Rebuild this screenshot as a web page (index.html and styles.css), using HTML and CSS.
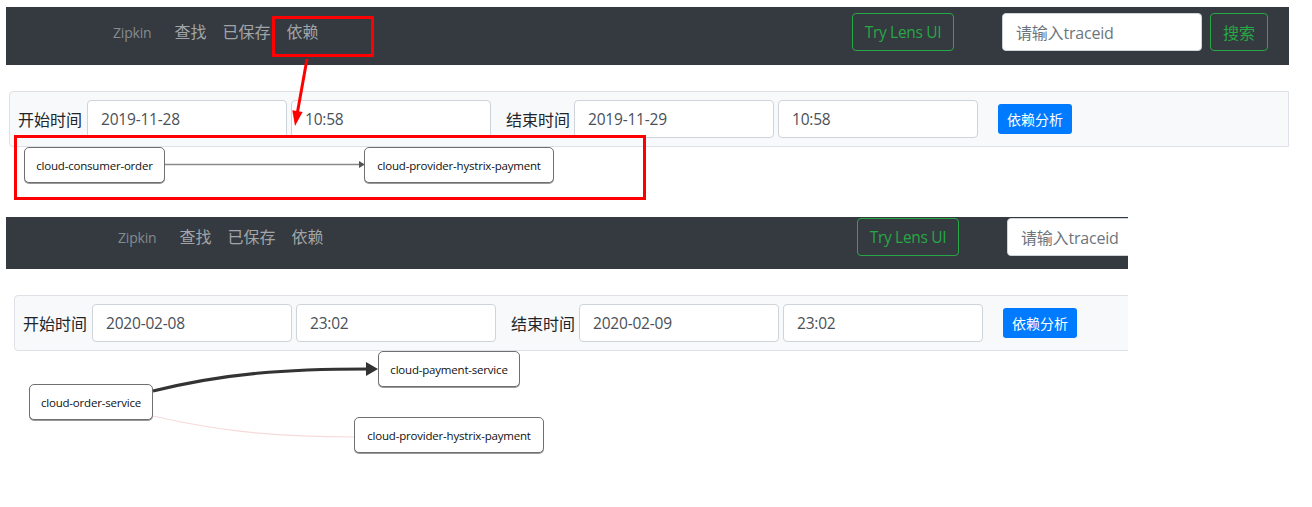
FILE: index.html
```html
<!DOCTYPE html>
<html lang="zh-CN">
<head>
<meta charset="utf-8">
<title>Zipkin 依赖</title>
<link rel="stylesheet" href="styles.css">
</head>
<body>
<div class="page">
  <section class="shot shot-a">
    <nav class="navbar">
      <span class="brand">Zipkin</span>
      <ul class="nav-links">
        <li>查找</li>
        <li>已保存</li>
        <li>依赖</li>
      </ul>
      <div class="nav-right">
        <span class="btn-outline lens">Try Lens UI</span>
        <span class="trace-input">请输入traceid</span>
        <span class="btn-outline search">搜索</span>
      </div>
    </nav>
    <div class="panel">
      <span class="label">开始时间</span>
      <span class="field">2019-11-28</span>
      <span class="field">10:58</span>
      <span class="label label-end">结束时间</span>
      <span class="field">2019-11-29</span>
      <span class="field">10:58</span>
      <span class="btn-primary">依赖分析</span>
    </div>
    <div class="graph graph-a">
      <svg class="edges" width="600" height="70" viewBox="0 0 600 70">
        <line x1="159" y1="17.5" x2="354" y2="17.5" stroke="#8a8a8a" stroke-width="1.5"/>
        <polygon points="353,14 359,17.5 353,21" fill="#555"/>
      </svg>
      <div class="node n-consumer">cloud-consumer-order</div>
      <div class="node n-hystrix-a">cloud-provider-hystrix-payment</div>
    </div>
  </section>

  <section class="shot shot-b">
    <nav class="navbar">
      <span class="brand">Zipkin</span>
      <ul class="nav-links">
        <li>查找</li>
        <li>已保存</li>
        <li>依赖</li>
      </ul>
      <div class="nav-right">
        <span class="btn-outline lens">Try Lens UI</span>
        <span class="trace-input">请输入traceid</span>
      </div>
    </nav>
    <div class="panel">
      <span class="label">开始时间</span>
      <span class="field">2020-02-08</span>
      <span class="field">23:02</span>
      <span class="label label-end">结束时间</span>
      <span class="field">2020-02-09</span>
      <span class="field">23:02</span>
      <span class="btn-primary">依赖分析</span>
    </div>
    <div class="graph graph-b">
      <svg class="edges" width="600" height="156" viewBox="0 0 600 156">
        <path d="M147,65 C220,82 280,86 348,86" fill="none" stroke="#f7dada" stroke-width="1.2"/>
        <path d="M147,40 C220,22 280,18 362,18" fill="none" stroke="#333" stroke-width="3.2"/>
        <polygon points="360,11 372,18 360,25" fill="#333"/>
      </svg>
      <div class="node n-payment">cloud-payment-service</div>
      <div class="node n-order">cloud-order-service</div>
      <div class="node n-hystrix-b">cloud-provider-hystrix-payment</div>
    </div>
  </section>

  <div class="annot annot-nav"></div>
  <div class="annot annot-graph"></div>
  <svg class="annot-arrow" width="40" height="80" viewBox="280 55 40 80">
    <line x1="307" y1="59" x2="297.5" y2="112" stroke="#f00" stroke-width="3"/>
    <polygon points="295,126 292.3,110.3 302.6,112.1" fill="#f00"/>
  </svg>
</div>
</body>
</html>
```

FILE: styles.css
```css
* {
  box-sizing: border-box;
}

html, body {
  margin: 0;
  padding: 0;
  background: #ffffff;
}

body {
  font-family: "Open Sans", "Noto Sans", "Noto Sans CJK SC", sans-serif;
  color: #212529;
}

.page {
  position: relative;
  width: 1312px;
  height: 507px;
  overflow: hidden;
}

.shot {
  margin-left: 6px;
}

.shot-a {
  padding-top: 7px;
  width: 1283px;
}

.shot-b {
  width: 1122px;
  overflow: hidden;
}

/* navbar */
.navbar {
  display: flex;
  align-items: center;
  background: #343a40;
  height: 58px;
  padding: 6px 21px 14px 107px;
}

.shot-b .navbar {
  width: 1288px;
  height: 52px;
  padding: 1px 87px 13px 112px;
}

.navbar > * {
  height: 38px;
}

.brand {
  display: flex;
  align-items: center;
  font-size: 14px;
  color: #868b90;
  margin-right: 15px;
  letter-spacing: -0.2px;
}

.nav-links {
  display: flex;
  align-items: center;
  list-style: none;
  margin: 0;
  padding: 0;
}

.nav-links li {
  padding: 0 8px;
  font-size: 16px;
  font-family: "Noto Sans CJK SC", sans-serif;
  color: #a2a5a8;
  line-height: 38px;
  position: relative;
  top: -1px;
}

.nav-right {
  display: flex;
  align-items: center;
  margin-left: auto;
}

.btn-outline {
  display: flex;
  align-items: center;
  justify-content: center;
  height: 38px;
  border: 1px solid #28a745;
  border-radius: 4px;
  color: #28a745;
  font-size: 16px;
  white-space: nowrap;
}

.lens {
  width: 102px;
  font-size: 15.5px;
  letter-spacing: -0.3px;
}

.search {
  width: 58px;
  margin-left: 8px;
  font-family: "Noto Sans CJK SC", sans-serif;
}

.trace-input {
  display: flex;
  align-items: center;
  width: 200px;
  height: 38px;
  margin-left: 48px;
  padding-left: 13px;
  background: #fff;
  border: 1px solid #ced4da;
  border-radius: 4px;
  color: #6c757d;
  font-size: 16px;
  font-family: "Open Sans", "Noto Sans CJK SC", sans-serif;
  letter-spacing: -0.2px;
}

/* filter panel */
.panel {
  display: flex;
  align-items: center;
  margin-top: 26px;
  margin-left: 3px;
  width: 1280px;
  height: 56px;
  padding: 0 8px;
  background: #f8f9fa;
  border: 1px solid #dee2e6;
  border-radius: 4px 0 0 4px;
}

.shot-b .panel {
  margin-left: 8px;
  width: 1280px;
}

.label {
  font-family: "Noto Sans CJK SC", sans-serif;
  font-size: 16px;
  color: #212529;
  margin-right: 5px;
  width: 64px;
  white-space: nowrap;
}

.label-end {
  margin-left: 11px;
  margin-right: 4px;
}

.field {
  display: flex;
  align-items: center;
  width: 200px;
  height: 38px;
  margin-right: 4px;
  padding-left: 13px;
  background: #fff;
  border: 1px solid #ced4da;
  border-radius: 4px;
  color: #495057;
  font-size: 15.5px;
  letter-spacing: -0.2px;
}

.btn-primary {
  display: flex;
  align-items: center;
  justify-content: center;
  width: 74px;
  height: 30px;
  margin-left: 16px;
  background: #007bff;
  border-radius: 3px;
  color: #fff;
  font-family: "Noto Sans CJK SC", sans-serif;
  font-size: 14px;
}

/* dependency graph canvas */
.graph {
  position: relative;
}

.graph-a {
  height: 70px;
}

.graph-b {
  height: 160px;
}

.edges {
  position: absolute;
  left: 0;
  top: 0;
}

.node {
  position: absolute;
  height: 36px;
  display: flex;
  align-items: center;
  justify-content: center;
  background: #fff;
  border: 1px solid #707070;
  border-radius: 5px;
  box-shadow: 0 1px 0 #9a9a9a;
  font-size: 11.5px;
  color: #111;
  letter-spacing: -0.2px;
  white-space: nowrap;
}

.n-consumer {
  left: 18px;
  top: 0;
  width: 141px;
}

.n-hystrix-a {
  left: 358px;
  top: 0;
  width: 190px;
}

.n-payment {
  left: 372px;
  top: 0;
  width: 142px;
}

.n-order {
  left: 23px;
  top: 33px;
  width: 124px;
}

.n-hystrix-b {
  left: 348px;
  top: 66px;
  width: 190px;
}

/* red annotations drawn over the screenshot */
.annot {
  position: absolute;
  border: 3px solid #ff0000;
}

.annot-nav {
  left: 272px;
  top: 16px;
  width: 102px;
  height: 41px;
}

.annot-graph {
  left: 14px;
  top: 135px;
  width: 632px;
  height: 65px;
}

.annot-arrow {
  position: absolute;
  left: 280px;
  top: 55px;
}
```
